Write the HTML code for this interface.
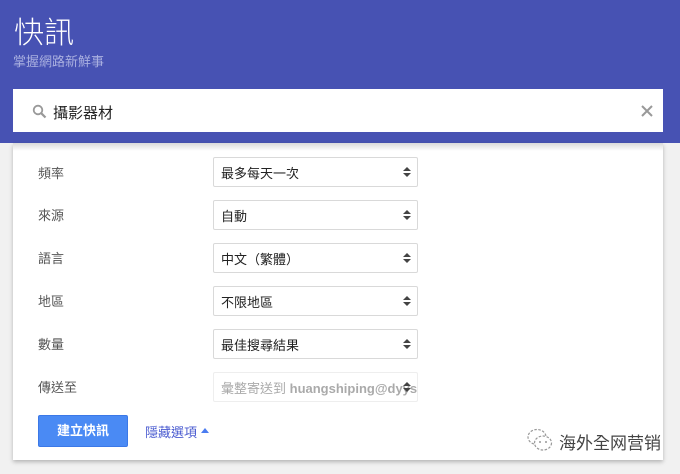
<!DOCTYPE html>
<html><head><meta charset="utf-8"><style>
*{margin:0;padding:0;box-sizing:border-box}
body{width:680px;height:474px;background:#f1f1f1;font-family:"Liberation Sans","Noto Sans CJK TC",sans-serif;position:relative;overflow:hidden}
.hdr{position:absolute;left:0;top:0;width:680px;height:143px;background:#4752b3}
.t{position:absolute;left:14px;top:8px;font-size:30px;color:#fff;font-weight:300}
.st{position:absolute;left:13px;top:51px;font-size:13px;color:#aab0e0}
.sb{position:absolute;left:13px;top:89px;width:650px;height:43px;background:#fff}
.sb .q{position:absolute;left:40px;top:13px;font-size:15px;color:#222}
.card{position:absolute;left:13px;top:143px;width:650px;height:317px;background:#fff;box-shadow:0 2px 4px rgba(0,0,0,.25)}
.card:before{content:"";position:absolute;left:0;top:0;right:0;height:8px;background:linear-gradient(rgba(0,0,0,.15),rgba(0,0,0,0))}
.lb{position:absolute;left:25px;font-size:13px;color:#555}
.sel{position:absolute;left:200px;width:205px;height:30px;border:1px solid #d9d9d9;border-radius:2px;font-size:13px;color:#222;padding:5px 0 0 7px}
.sel:after{content:"";position:absolute;right:6px;top:9px;width:0;height:0;border-left:4px solid transparent;border-right:4px solid transparent;border-bottom:4px solid #444}
.sel:before{content:"";position:absolute;right:6px;top:15px;width:0;height:0;border-left:4px solid transparent;border-right:4px solid transparent;border-top:4px solid #444}
.btn{position:absolute;left:25px;top:272px;width:90px;height:32px;background:#4a8af4;border:1px solid #3b78e7;border-radius:2px;color:#fff;font-size:13px;font-weight:bold;text-align:center;line-height:30px}
.lk{position:absolute;left:132px;top:279px;font-size:13px;color:#4a5bd0}
.tri{position:absolute;left:188px;top:285px;border-left:4px solid transparent;border-right:4px solid transparent;border-bottom:5px solid #4a7cf0}
.wm{position:absolute;left:546px;top:286px;font-size:17px;color:#444}
</style></head><body>
<div class="hdr"><div class="t">快訊</div><div class="st">掌握網路新鮮事</div></div>
<div class="sb">
<svg style="position:absolute;left:19px;top:15px" width="15" height="15" viewBox="0 0 15 15"><circle cx="6" cy="6" r="4.3" fill="none" stroke="#999" stroke-width="1.8"/><path d="M9.2 9.2L13.5 13.5" stroke="#999" stroke-width="2.2"/></svg>
<div class="q">攝影器材</div>
<svg style="position:absolute;left:628px;top:16px" width="12" height="12" viewBox="0 0 12 12"><path d="M1 1L11 11M11 1L1 11" stroke="#999" stroke-width="2"/></svg>
</div>
<div class="card">
<svg style="position:absolute;left:513px;top:284px" width="28" height="26" viewBox="0 0 28 26"><ellipse cx="11" cy="10" rx="9" ry="7.5" fill="none" stroke="#999" stroke-width="1.2" stroke-dasharray="2.5 1.5"/><ellipse cx="17" cy="16" rx="8.5" ry="7" fill="#fff" stroke="#999" stroke-width="1.2" stroke-dasharray="2.5 1.5"/><circle cx="14" cy="15" r="1" fill="#999"/><circle cx="20" cy="15" r="1" fill="#999"/></svg>
<div class="lb" style="top:20px">頻率</div><div class="sel" style="top:14px">最多每天一次</div>
<div class="lb" style="top:62px">來源</div><div class="sel" style="top:57px">自動</div>
<div class="lb" style="top:105px">語言</div><div class="sel" style="top:100px">中文（繁體）</div>
<div class="lb" style="top:148px">地區</div><div class="sel" style="top:143px">不限地區</div>
<div class="lb" style="top:191px">數量</div><div class="sel" style="top:186px">最佳搜尋結果</div>
<div class="lb" style="top:234px">傳送至</div><div class="sel" style="top:229px;color:#aaa;border-color:#eee;overflow:hidden;white-space:nowrap;padding-right:20px">彙整寄送到 <b>huangshiping@dyyseo</b></div>
<div class="btn">建立快訊</div>
<div class="lk">隱藏選項</div><div class="tri"></div>
<div class="wm">海外全网营销</div>
</div>
</body></html>
